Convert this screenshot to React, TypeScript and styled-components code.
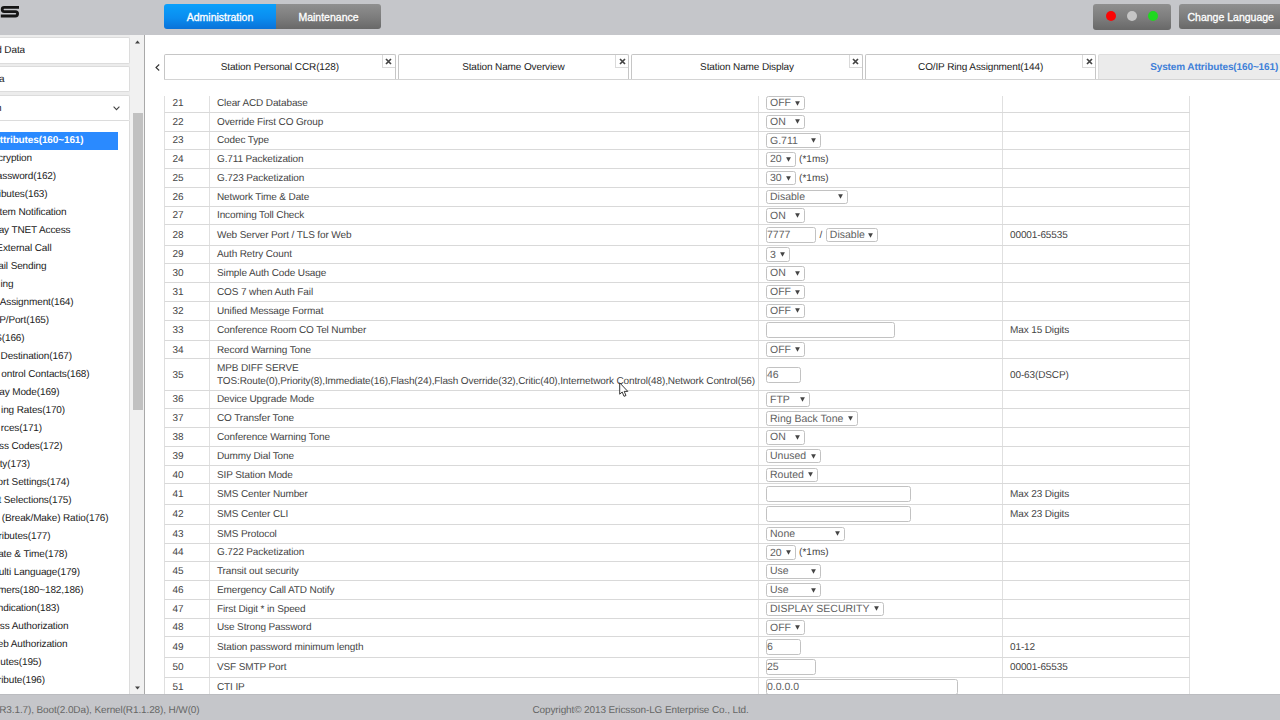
import React from 'react';
import styled, { createGlobalStyle, css } from 'styled-components';

const GlobalStyle = createGlobalStyle`
  * { box-sizing: border-box; }
  html, body { margin: 0; padding: 0; overflow: hidden; background: #fff; }
  body {
    font-family: "Liberation Sans", Arial, sans-serif;
    font-size: 10px;
    letter-spacing: -0.12px;
    color: #444;
    text-rendering: geometricPrecision;
  }
`;

const Page = styled.div`
  position: relative;
  width: 1280px;
  height: 720px;
  display: flex;
  flex-direction: column;
  overflow: hidden;
`;

const Header = styled.header`
  flex: none;
  height: 35px;
  display: flex;
  align-items: flex-start;
  padding-top: 4px;
  background: #c5c6ca;
`;

const LogoSlot = styled.div`
  flex: none;
  width: 164px;
  line-height: 0;
`;

const ModeSwitch = styled.nav`
  display: flex;
  height: 25px;
  border-radius: 3px;
  overflow: hidden;
`;

const ModeButton = styled.button<{ $active?: boolean; $width: number }>`
  width: ${(p) => p.$width}px;
  padding: 0;
  border: 0;
  font: inherit;
  font-size: 10.5px;
  letter-spacing: 0;
  color: #fff;
  -webkit-text-stroke: 0.3px #fff;
  background: ${(p) =>
    p.$active
      ? 'linear-gradient(#0aa0fb, #0a8df0 55%, #0a72d8)'
      : 'linear-gradient(#8f8f8f, #7c7c7c 55%, #686868)'};
`;

const HeaderRight = styled.div`
  display: flex;
  margin-left: auto;
  gap: 8px;
`;

const LightBox = styled.div`
  width: 78px;
  height: 26px;
  display: flex;
  justify-content: center;
  gap: 10.5px;
  padding-top: 6.5px;
  border-radius: 3px;
  background: linear-gradient(#8f8f8f, #7c7c7c 55%, #686868);
`;

const Light = styled.span<{ $color: string }>`
  width: 10.5px;
  height: 10.5px;
  border-radius: 50%;
  background: ${(p) => p.$color};
`;

const LanguageButton = styled.button`
  width: 101px;
  height: 25px;
  padding: 0 0 0 8.5px;
  border: 0;
  border-radius: 3px 0 0 3px;
  text-align: left;
  white-space: nowrap;
  font: inherit;
  font-size: 10.5px;
  letter-spacing: 0;
  color: #fff;
  -webkit-text-stroke: 0.3px #fff;
  background: linear-gradient(#8f8f8f, #7c7c7c 55%, #686868);
`;

const Body = styled.div`
  flex: 1;
  min-height: 0;
  display: flex;
`;

const Sidebar = styled.aside`
  flex: none;
  width: 145px;
  display: flex;
  border-right: 1px solid #a9a9a9;
`;

const Menu = styled.div`
  flex: none;
  width: 130px;
  display: flex;
  flex-direction: column;
  padding-top: 2px;
  background: #ececec;
  color: #222;
`;

const MenuGroup = styled.div<{ $height: number; $gap?: number }>`
  flex: none;
  display: flex;
  align-items: center;
  justify-content: space-between;
  height: ${(p) => p.$height}px;
  margin-bottom: ${(p) => p.$gap ?? 0}px;
  padding-right: 9px;
  border: 1px solid #dcdcdc;
  border-left: 0;
  border-radius: 0 2px 2px 0;
  background: #fff;
`;

const MenuTitle = styled.span<{ $width: number }>`
  width: ${(p) => p.$width}px;
  display: flex;
  justify-content: flex-end;
  overflow: hidden;
  white-space: nowrap;
`;

const MenuList = styled.div`
  flex: 1;
  padding-top: 11px;
  border-right: 1px solid #dcdcdc;
  background: #fff;
`;

const MenuItem = styled.div<{ $active?: boolean }>`
  width: 118px;
  height: 18px;
  line-height: 18.5px;
  ${(p) =>
    p.$active &&
    css`
      background: #2a8aff;
      color: #fff;
      font-weight: bold;
    `}
`;

const Scrollbar = styled.div`
  flex: none;
  width: 14px;
  display: flex;
  flex-direction: column;
  align-items: center;
  padding: 5px 0 4px 1px;
  background: #f1f1f1;
`;

const Thumb = styled.div`
  width: 10px;
  height: 297px;
  margin: 69px 0 auto;
  background: #c1c1c1;
`;

const Main = styled.main`
  flex: 1;
  min-width: 0;
  display: flex;
  flex-direction: column;
  overflow: hidden;
`;

const TabBar = styled.div`
  flex: none;
  display: flex;
  height: 26px;
  margin-top: 19px;
`;

const TabArrow = styled.div`
  flex: none;
  width: 19px;
  display: flex;
  align-items: center;
  padding-left: 10px;
`;

const Tabs = styled.div`
  display: flex;
  gap: 2px;
  border-bottom: 1px solid #d4d4d4;
`;

const Tab = styled.div<{ $active?: boolean }>`
  position: relative;
  flex: none;
  width: 231.6px;
  display: flex;
  align-items: center;
  justify-content: center;
  padding-top: 1px;
  border: 1px solid #c6c6c6;
  border-bottom: 0;
  border-radius: 2px 2px 0 0;
  color: #222;
  ${(p) =>
    p.$active &&
    css`
      background: #ebebeb;
      border-color: #dedede;
      color: #3f80d8;
      font-weight: bold;
    `}
`;

const CloseButton = styled.span`
  position: absolute;
  top: 0;
  right: 0;
  width: 13px;
  height: 13px;
  display: flex;
  align-items: center;
  justify-content: center;
  border: 1px solid #dadada;
  border-top: 0;
  border-right: 0;
`;

const TableView = styled.div`
  flex: 1;
  min-height: 0;
  display: flex;
  flex-direction: column;
  justify-content: flex-start;
  width: 1026px;
  margin: 16px 0 0 19px;
  overflow: hidden;
`;

const Row = styled.div<{ $height: number }>`
  flex: none;
  display: grid;
  grid-template-columns: 44.5px 549px 244px 187.5px;
  width: 1026px;
  height: ${(p) => p.$height}px;
  border-bottom: 1px solid #d9d9d9;
  border-left: 1px solid #dfdfdf;
  &:first-child { margin-top: -2px; }
`;

const Cell = styled.div`
  display: flex;
  align-items: center;
  min-width: 0;
  padding: 1.4px 0 0 7.5px;
  line-height: 13.5px;
  white-space: pre;
  border-right: 1px solid #e0e0e0;
`;

const ControlCell = styled(Cell)`
  padding-top: 0.4px;
  gap: 3.5px;
`;

const ControlLabel = styled.span`
  padding-top: 1px;
  letter-spacing: 0.05px;
`;

const controlBox = css<{ $width: number }>`
  flex: none;
  width: ${(p) => p.$width}px;
  display: flex;
  align-items: center;
  border: 1px solid #c2c2c2;
  border-radius: 2.5px;
  font-size: 10.5px;
  letter-spacing: 0;
  color: #606060;
`;

const SelectBox = styled.div<{ $width: number }>`
  ${controlBox}
  height: 14.6px;
  justify-content: space-between;
  padding: 0 4px 0 3px;
`;

const SelectValue = styled.span`
  padding-top: 1.6px;
`;

const InputBox = styled.div<{ $width: number }>`
  ${controlBox}
  height: 16px;
  padding-top: 1.6px;
`;

const Footer = styled.footer`
  flex: none;
  height: 26px;
  display: flex;
  align-items: center;
  padding-top: 5px;
  background: #c5c6ca;
  border-top: 1px solid #bbbcc0;
  color: #666;
`;

const Version = styled.div`
  flex: none;
  width: 199.5px;
  display: flex;
  justify-content: flex-end;
  overflow: hidden;
  white-space: nowrap;
`;

const Copyright = styled.div`
  margin-left: 333px;
`;

const Pointer = styled.svg`
  position: absolute;
  left: 619px;
  top: 382px;
`;

type Control =
  | { kind: 'select'; width: number; value: string }
  | { kind: 'input'; width: number; value: string }
  | { kind: 'text'; value: string };

const sel = (value: string, width: number): Control => ({ kind: 'select', width, value });
const inp = (value: string, width: number): Control => ({ kind: 'input', width, value });
const txt = (value: string): Control => ({ kind: 'text', value });

interface Attribute {
  no: number;
  name: string;
  controls: Control[];
  note?: string;
  height?: number;
}

const attributes: Attribute[] = [
  { no: 21, name: 'Clear ACD Database', controls: [sel('OFF', 38.5)] },
  { no: 22, name: 'Override First CO Group', controls: [sel('ON', 38.5)] },
  { no: 23, name: 'Codec Type', controls: [sel('G.711', 55)] },
  { no: 24, name: 'G.711 Packetization', controls: [sel('20', 29.5), txt('(*1ms)')] },
  { no: 25, name: 'G.723 Packetization', controls: [sel('30', 29.5), txt('(*1ms)')] },
  { no: 26, name: 'Network Time & Date', controls: [sel('Disable', 82)] },
  { no: 27, name: 'Incoming Toll Check', controls: [sel('ON', 38.5)] },
  { no: 28, name: 'Web Server Port / TLS for Web', controls: [inp('7777', 50), txt('/'), sel('Disable', 52.5)], note: '00001-65535' },
  { no: 29, name: 'Auth Retry Count', controls: [sel('3', 23.5)] },
  { no: 30, name: 'Simple Auth Code Usage', controls: [sel('ON', 38.5)] },
  { no: 31, name: 'COS 7 when Auth Fail', controls: [sel('OFF', 38.5)] },
  { no: 32, name: 'Unified Message Format', controls: [sel('OFF', 38.5)] },
  { no: 33, name: 'Conference Room CO Tel Number', controls: [inp('', 129)], note: 'Max 15 Digits' },
  { no: 34, name: 'Record Warning Tone', controls: [sel('OFF', 38.5)] },
  {
    no: 35,
    name: 'MPB DIFF SERVE\nTOS:Route(0),Priority(8),Immediate(16),Flash(24),Flash Override(32),Critic(40),Internetwork Control(48),Network Control(56)',
    controls: [inp('46', 34.5)],
    note: '00-63(DSCP)',
    height: 31.2,
  },
  { no: 36, name: 'Device Upgrade Mode', controls: [sel('FTP', 43.5)] },
  { no: 37, name: 'CO Transfer Tone', controls: [sel('Ring Back Tone', 92)] },
  { no: 38, name: 'Conference Warning Tone', controls: [sel('ON', 38.5)] },
  { no: 39, name: 'Dummy Dial Tone', controls: [sel('Unused', 54.5)] },
  { no: 40, name: 'SIP Station Mode', controls: [sel('Routed', 52)] },
  { no: 41, name: 'SMS Center Number', controls: [inp('', 144.5)], note: 'Max 23 Digits' },
  { no: 42, name: 'SMS Center CLI', controls: [inp('', 144.5)], note: 'Max 23 Digits' },
  { no: 43, name: 'SMS Protocol', controls: [sel('None', 78.5)] },
  { no: 44, name: 'G.722 Packetization', controls: [sel('20', 29.5), txt('(*1ms)')] },
  { no: 45, name: 'Transit out security', controls: [sel('Use', 54.5)] },
  { no: 46, name: 'Emergency Call ATD Notify', controls: [sel('Use', 54.5)] },
  { no: 47, name: 'First Digit * in Speed', controls: [sel('DISPLAY SECURITY', 117.5)] },
  { no: 48, name: 'Use Strong Password', controls: [sel('OFF', 38.5)] },
  { no: 49, name: 'Station password minimum length', controls: [inp('6', 34.5)], note: '01-12' },
  { no: 50, name: 'VSF SMTP Port', controls: [inp('25', 50)], note: '00001-65535' },
  { no: 51, name: 'CTI IP', controls: [inp('0.0.0.0', 192)] },
];

// Each entry holds the visible end of the label and where that label ends.
const menuItems: [string, number][] = [
  ['ttributes(160~161)', 83.5],
  ['cryption', 32],
  ['assword(162)', 56],
  ['ibutes(163)', 47.5],
  ['tem Notification', 66.5],
  ['ay TNET Access', 70.5],
  ['External Call', 51.5],
  ['ail Sending', 46.5],
  ['ing', 13.5],
  ['Assignment(164)', 73.5],
  ['P/Port(165)', 49],
  ['S(166)', 24.5],
  ['Destination(167)', 72],
  ['ontrol Contacts(168)', 89.5],
  ['ay Mode(169)', 59.5],
  ['ing Rates(170)', 65],
  ['rces(171)', 42],
  ['ss Codes(172)', 62.5],
  ['ty(173)', 30],
  ['ort Settings(174)', 69.5],
  ['t Selections(175)', 71.5],
  ['(Break/Make) Ratio(176)', 108.5],
  ['ributes(177)', 50.5],
  ['ate & Time(178)', 67.5],
  ['ulti Language(179)', 80],
  ['mers(180~182,186)', 83.5],
  ['ndication(183)', 59.5],
  ['ss Authorization', 68.5],
  ['eb Authorization', 67.5],
  ['utes(195)', 41.5],
  ['ribute(196)', 45],
];

const tabs = [
  'Station Personal CCR(128)',
  'Station Name Overview',
  'Station Name Display',
  'CO/IP Ring Assignment(144)',
];

const rowHeight = (a: Attribute) =>
  a.height ?? (a.controls.some((c) => c.kind === 'input') ? 20.15 : 18.77);

const DownArrow = () => (
  <svg width="5" height="5" viewBox="0 0 5 5">
    <path d="M0.1 0.2H4.9L2.5 4.8Z" fill="#444" />
  </svg>
);

const CloseIcon = () => (
  <svg width="7" height="7" viewBox="0 0 7 7">
    <path d="M1 1L6 6M6 1L1 6" stroke="#444" strokeWidth="1.7" />
  </svg>
);

const ControlView = ({ control }: { control: Control }) => {
  if (control.kind === 'select') {
    return (
      <SelectBox $width={control.width}>
        <SelectValue>{control.value}</SelectValue>
        <DownArrow />
      </SelectBox>
    );
  }
  if (control.kind === 'input') {
    return <InputBox $width={control.width}>{control.value}</InputBox>;
  }
  return <ControlLabel>{control.value}</ControlLabel>;
};

export default function App() {
  return (
    <>
      <GlobalStyle />
      <Page>
        <Header>
          <LogoSlot>
            <svg width="20" height="16" viewBox="0 0 20 16">
              <path
                d="M19 3.3H4.2Q2.2 3.3 2.2 5.2Q2.2 7.6 4.2 7.6H15.4Q17.6 7.6 17.6 9.8Q17.6 12 15.4 12H0.8"
                fill="none"
                stroke="#151515"
                strokeWidth="2.8"
              />
            </svg>
          </LogoSlot>
          <ModeSwitch>
            <ModeButton $active $width={112}>Administration</ModeButton>
            <ModeButton $width={105}>Maintenance</ModeButton>
          </ModeSwitch>
          <HeaderRight>
            <LightBox>
              <Light $color="#fb0505" />
              <Light $color="#c6c6c6" />
              <Light $color="#1fd81f" />
            </LightBox>
            <LanguageButton>Change Language</LanguageButton>
          </HeaderRight>
        </Header>

        <Body>
          <Sidebar>
            <Menu>
              <MenuGroup $height={27} $gap={2}>
                <MenuTitle $width={25}>d Data</MenuTitle>
              </MenuGroup>
              <MenuGroup $height={26} $gap={3}>
                <MenuTitle $width={4.5}>a</MenuTitle>
              </MenuGroup>
              <MenuGroup $height={26}>
                <MenuTitle $width={1.5}>n</MenuTitle>
                <svg width="7" height="5" viewBox="0 0 7 5">
                  <path d="M0.6 0.7L3.5 3.7L6.4 0.7" fill="none" stroke="#444" strokeWidth="1.1" />
                </svg>
              </MenuGroup>
              <MenuList>
                {menuItems.map(([label, end], i) => (
                  <MenuItem key={label} $active={i === 0}>
                    <MenuTitle $width={end}>{label}</MenuTitle>
                  </MenuItem>
                ))}
              </MenuList>
            </Menu>
            <Scrollbar>
              <svg width="5" height="4" viewBox="0 0 5 4">
                <path d="M0 3.5L2.5 0.5L5 3.5Z" fill="#444" />
              </svg>
              <Thumb />
              <svg width="5" height="4" viewBox="0 0 5 4">
                <path d="M0 0.5L2.5 3.5L5 0.5Z" fill="#444" />
              </svg>
            </Scrollbar>
          </Sidebar>

          <Main>
            <TabBar>
              <TabArrow>
                <svg width="5" height="7" viewBox="0 0 5 7">
                  <path d="M4.2 0.5L1 3.5L4.2 6.5" fill="none" stroke="#333" strokeWidth="1.1" />
                </svg>
              </TabArrow>
              <Tabs>
                {tabs.map((label) => (
                  <Tab key={label}>
                    {label}
                    <CloseButton>
                      <CloseIcon />
                    </CloseButton>
                  </Tab>
                ))}
                <Tab $active>System Attributes(160~161)</Tab>
              </Tabs>
            </TabBar>
            <TableView>
              {attributes.map((a) => (
                <Row key={a.no} $height={rowHeight(a)}>
                  <Cell>{a.no}</Cell>
                  <Cell>{a.name}</Cell>
                  <ControlCell>
                    {a.controls.map((c, i) => (
                      <ControlView key={i} control={c} />
                    ))}
                  </ControlCell>
                  <Cell>{a.note}</Cell>
                </Row>
              ))}
            </TableView>
          </Main>
        </Body>

        <Footer>
          <Version>(R3.1.7), Boot(2.0Da), Kernel(R1.1.28), H/W(0)</Version>
          <Copyright>Copyright© 2013 Ericsson-LG Enterprise Co., Ltd.</Copyright>
        </Footer>

        <Pointer width="10" height="16" viewBox="0 0 10 16">
          <path
            d="M0.7 0.8V12.2L3.2 10L5 14.3L7 13.5L5.2 9.4H8.8Z"
            fill="#fff"
            stroke="#222"
            strokeWidth="0.9"
          />
        </Pointer>
      </Page>
    </>
  );
}
